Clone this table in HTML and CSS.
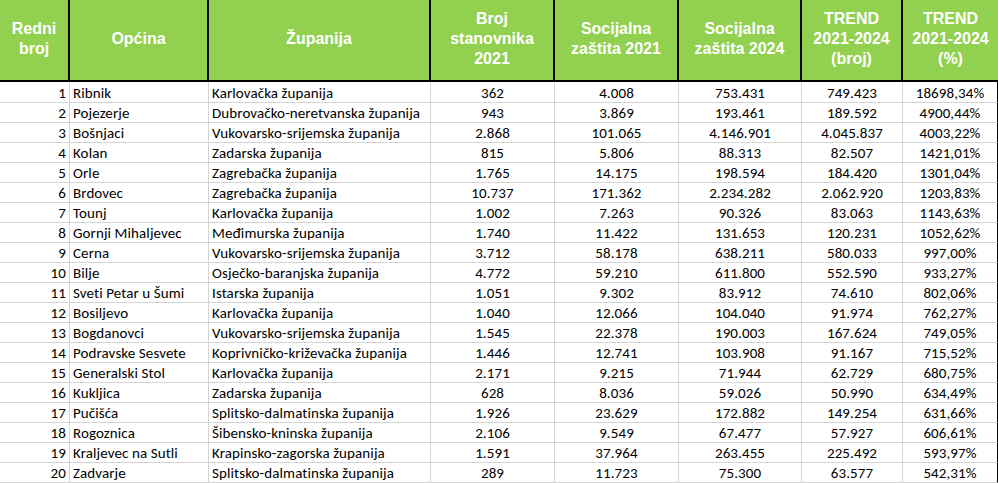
FILE: index.html
```html
<!DOCTYPE html>
<html lang="hr">
<head>
<meta charset="utf-8">
<title>Socijalna zaštita</title>
<link rel="stylesheet" href="styles.css">
</head>
<body>
<div class="sheet">
  <div class="row head">
    <div class="c">Redni<br>broj</div>
    <div class="c">Općina</div>
    <div class="c">Županija</div>
    <div class="c">Broj<br>stanovnika<br>2021</div>
    <div class="c">Socijalna<br>zaštita 2021</div>
    <div class="c">Socijalna<br>zaštita 2024</div>
    <div class="c">TREND<br>2021-2024<br>(broj)</div>
    <div class="c">TREND<br>2021-2024<br>(%)</div>
  </div>
  <div class="row first"><div class="c n">1</div><div class="c t">Ribnik</div><div class="c t">Karlovačka županija</div><div class="c m">362</div><div class="c m">4.008</div><div class="c m">753.431</div><div class="c m">749.423</div><div class="c m">18698,34%</div></div>
  <div class="row"><div class="c n">2</div><div class="c t">Pojezerje</div><div class="c t">Dubrovačko-neretvanska županija</div><div class="c m">943</div><div class="c m">3.869</div><div class="c m">193.461</div><div class="c m">189.592</div><div class="c m">4900,44%</div></div>
  <div class="row"><div class="c n">3</div><div class="c t">Bošnjaci</div><div class="c t">Vukovarsko-srijemska županija</div><div class="c m">2.868</div><div class="c m">101.065</div><div class="c m">4.146.901</div><div class="c m">4.045.837</div><div class="c m">4003,22%</div></div>
  <div class="row"><div class="c n">4</div><div class="c t">Kolan</div><div class="c t">Zadarska županija</div><div class="c m">815</div><div class="c m">5.806</div><div class="c m">88.313</div><div class="c m">82.507</div><div class="c m">1421,01%</div></div>
  <div class="row"><div class="c n">5</div><div class="c t">Orle</div><div class="c t">Zagrebačka županija</div><div class="c m">1.765</div><div class="c m">14.175</div><div class="c m">198.594</div><div class="c m">184.420</div><div class="c m">1301,04%</div></div>
  <div class="row"><div class="c n">6</div><div class="c t">Brdovec</div><div class="c t">Zagrebačka županija</div><div class="c m">10.737</div><div class="c m">171.362</div><div class="c m">2.234.282</div><div class="c m">2.062.920</div><div class="c m">1203,83%</div></div>
  <div class="row"><div class="c n">7</div><div class="c t">Tounj</div><div class="c t">Karlovačka županija</div><div class="c m">1.002</div><div class="c m">7.263</div><div class="c m">90.326</div><div class="c m">83.063</div><div class="c m">1143,63%</div></div>
  <div class="row"><div class="c n">8</div><div class="c t">Gornji Mihaljevec</div><div class="c t">Međimurska županija</div><div class="c m">1.740</div><div class="c m">11.422</div><div class="c m">131.653</div><div class="c m">120.231</div><div class="c m">1052,62%</div></div>
  <div class="row"><div class="c n">9</div><div class="c t">Cerna</div><div class="c t">Vukovarsko-srijemska županija</div><div class="c m">3.712</div><div class="c m">58.178</div><div class="c m">638.211</div><div class="c m">580.033</div><div class="c m">997,00%</div></div>
  <div class="row"><div class="c n">10</div><div class="c t">Bilje</div><div class="c t">Osječko-baranjska županija</div><div class="c m">4.772</div><div class="c m">59.210</div><div class="c m">611.800</div><div class="c m">552.590</div><div class="c m">933,27%</div></div>
  <div class="row"><div class="c n">11</div><div class="c t">Sveti Petar u Šumi</div><div class="c t">Istarska županija</div><div class="c m">1.051</div><div class="c m">9.302</div><div class="c m">83.912</div><div class="c m">74.610</div><div class="c m">802,06%</div></div>
  <div class="row"><div class="c n">12</div><div class="c t">Bosiljevo</div><div class="c t">Karlovačka županija</div><div class="c m">1.040</div><div class="c m">12.066</div><div class="c m">104.040</div><div class="c m">91.974</div><div class="c m">762,27%</div></div>
  <div class="row"><div class="c n">13</div><div class="c t">Bogdanovci</div><div class="c t">Vukovarsko-srijemska županija</div><div class="c m">1.545</div><div class="c m">22.378</div><div class="c m">190.003</div><div class="c m">167.624</div><div class="c m">749,05%</div></div>
  <div class="row"><div class="c n">14</div><div class="c t">Podravske Sesvete</div><div class="c t">Koprivničko-križevačka županija</div><div class="c m">1.446</div><div class="c m">12.741</div><div class="c m">103.908</div><div class="c m">91.167</div><div class="c m">715,52%</div></div>
  <div class="row"><div class="c n">15</div><div class="c t">Generalski Stol</div><div class="c t">Karlovačka županija</div><div class="c m">2.171</div><div class="c m">9.215</div><div class="c m">71.944</div><div class="c m">62.729</div><div class="c m">680,75%</div></div>
  <div class="row"><div class="c n">16</div><div class="c t">Kukljica</div><div class="c t">Zadarska županija</div><div class="c m">628</div><div class="c m">8.036</div><div class="c m">59.026</div><div class="c m">50.990</div><div class="c m">634,49%</div></div>
  <div class="row"><div class="c n">17</div><div class="c t">Pučišća</div><div class="c t">Splitsko-dalmatinska županija</div><div class="c m">1.926</div><div class="c m">23.629</div><div class="c m">172.882</div><div class="c m">149.254</div><div class="c m">631,66%</div></div>
  <div class="row"><div class="c n">18</div><div class="c t">Rogoznica</div><div class="c t">Šibensko-kninska županija</div><div class="c m">2.106</div><div class="c m">9.549</div><div class="c m">67.477</div><div class="c m">57.927</div><div class="c m">606,61%</div></div>
  <div class="row"><div class="c n">19</div><div class="c t">Kraljevec na Sutli</div><div class="c t">Krapinsko-zagorska županija</div><div class="c m">1.591</div><div class="c m">37.964</div><div class="c m">263.455</div><div class="c m">225.492</div><div class="c m">593,97%</div></div>
  <div class="row"><div class="c n">20</div><div class="c t">Zadvarje</div><div class="c t">Splitsko-dalmatinska županija</div><div class="c m">289</div><div class="c m">11.723</div><div class="c m">75.300</div><div class="c m">63.577</div><div class="c m">542,31%</div></div>
</div>
</body>
</html>
```

FILE: styles.css
```css
* { box-sizing: border-box; }
html, body { margin: 0; padding: 0; background: #fff; }
body { width: 998px; height: 483px; overflow: hidden; }
.sheet { width: 998px; }
.row {
  display: grid;
  grid-template-columns: 70px 139px 222px 124px 124px 123px 101px 95px;
  height: 20px;
}
.row.first { height: 21px; }
.row .c {
  border-right: 1px solid #d4d4d4;
  border-bottom: 1px solid #d4d4d4;
  font-family: Carlito, "Open Sans", sans-serif;
  font-size: 15px;
  letter-spacing: 0.1px;
  line-height: 18px;
  color: #000;
  white-space: nowrap;
  overflow: hidden;
  display: flex;
  align-items: flex-end;
}
.row .c:last-child { border-right-color: #000; }
.row .c.n { justify-content: flex-end; padding-right: 3px; }
.row .c.t { justify-content: flex-start; padding-left: 3px; }
.row .c.m { justify-content: center; }
.row.head { height: 82px; background: #92d050; }
.row.head .c {
  border-right: 2px solid #000;
  border-bottom: 2px solid #000;
  font-family: "Liberation Sans", Arial, sans-serif;
  font-weight: bold;
  font-size: 16px;
  letter-spacing: 0;
  line-height: 20px;
  color: #fff;
  align-items: center;
  justify-content: center;
  text-align: center;
  padding-bottom: 2px;
}
.row.head .c:last-child { border-right: 0; }
```
